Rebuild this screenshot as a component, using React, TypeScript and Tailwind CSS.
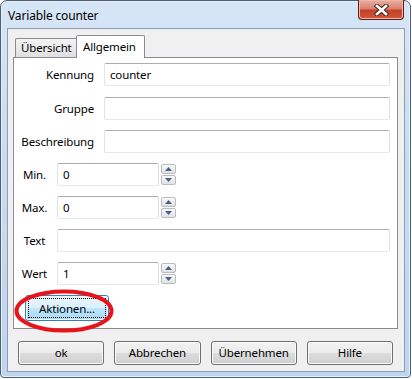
import React from "react";

function TextBox({ w, value }: { w: string; value?: string }) {
  return (
    <div
      className={`${w} h-[23px] shrink-0 rounded-[2px] border border-[#abadb3] border-l-[#e2e3ea] border-r-[#dbdfe6] border-b-[#e3e9ef] bg-white pl-[5px] flex items-center text-black`}
    >
      {value}
    </div>
  );
}

function SpinBtn({ up }: { up?: boolean }) {
  return (
    <div className="w-[15px] h-[10px] rounded-[2px] border border-[#bcbcbc] bg-gradient-to-b from-[#f9f9f9] to-[#e2e2e2] flex items-center justify-center">
      <svg width="7" height="4" viewBox="0 0 7 4">
        {up ? (
          <path d="M0 4 L3.5 0 L7 4 Z" fill="#4a5f8c" />
        ) : (
          <path d="M0 0 L3.5 4 L7 0 Z" fill="#4a5f8c" />
        )}
      </svg>
    </div>
  );
}

function Spin() {
  return (
    <div className="ml-[2px] flex flex-col gap-[1px] pt-[1px]">
      <SpinBtn up />
      <SpinBtn />
    </div>
  );
}

function Btn({ children }: { children: React.ReactNode }) {
  return (
    <div className="h-[24px] rounded-[3px] border border-[#707070] bg-[linear-gradient(#f2f2f2_0%,#ebebeb_50%,#dddddd_50%,#cfcfcf_100%)] shadow-[inset_0_0_0_1px_#fafafa] flex items-center justify-center text-black">
      {children}
    </div>
  );
}

export default function App() {
  return (
    <div className="w-[412px] h-[379px] bg-white font-['Noto_Sans',sans-serif] text-[11.5px] tracking-[-0.15px] leading-none text-black">
      <div className="w-[411px] h-[378px] rounded-t-[7px] rounded-b-[4px] border border-[#4f5f73] bg-[linear-gradient(180deg,#d6e6f7_0%,#c9dcf1_40%,#bfd5ee_100%)] flex flex-col shadow-[inset_0_0_0_1px_#e6f0fb]">
        {/* title bar */}
        <div className="h-[27px] flex items-start justify-between pl-[7px]">
          <div className="mt-[9px] text-[12px] text-black">Variable counter</div>
          <div className="mt-[-1px] mr-[6px] w-[46px] h-[20px] rounded-b-[4px] border border-[#5e1c14] border-t-0 bg-[linear-gradient(180deg,#eab0a2_0%,#d98170_45%,#c4402a_55%,#d2583c_100%)] shadow-[inset_0_0_0_1px_#efb9aa] flex items-center justify-center">
            <svg width="15" height="12" viewBox="0 0 15 12">
              <path d="M3 2 L12 10 M12 2 L3 10" stroke="#4a2a2a" strokeWidth="4.6" strokeLinecap="square" />
              <path d="M3 2 L12 10 M12 2 L3 10" stroke="#ffffff" strokeWidth="2.6" strokeLinecap="square" />
            </svg>
          </div>
        </div>

        {/* client area */}
        <div className="ml-[6px] w-[398px] h-[344px] border border-[#8d9db1] bg-[#f0f0f0] flex flex-col">
          <div className="mt-[6px] ml-[5px] w-[385px] flex flex-col">
            {/* tabs */}
            <div className="h-[22px] flex items-end pl-[2px]">
              <div className="w-[61px] h-[19px] border-l border-t border-[#898c95] bg-[linear-gradient(180deg,#f3f3f3_0%,#ebebeb_50%,#dedede_100%)] flex items-center pl-[5px] rounded-tl-[2px]">
                Übersicht
              </div>
              <div className="relative z-10 -mb-px w-[69px] h-[23px] border-l border-t border-r border-[#898c95] bg-white flex items-start pt-[5px] pl-[6px] rounded-t-[2px]">
                Allgemein
              </div>
            </div>
            {/* panel */}
            <div className="h-[272px] border border-[#898c95] bg-white flex flex-col pt-[5px]">
              <div className="flex items-center">
                <div className="w-[80px] text-right">Kennung</div>
                <div className="ml-[10px]">
                  <TextBox w="w-[286px]" value="counter" />
                </div>
              </div>
              <div className="mt-[11px] flex items-center">
                <div className="w-[80px] text-right">Gruppe</div>
                <div className="ml-[10px]">
                  <TextBox w="w-[286px]" />
                </div>
              </div>
              <div className="mt-[10px] flex items-center">
                <div className="w-[80px] text-right">Beschreibung</div>
                <div className="ml-[10px]">
                  <TextBox w="w-[286px]" />
                </div>
              </div>
              <div className="mt-[10px] flex items-start">
                <div className="w-[41px] h-[23px] flex items-center justify-center">Min.</div>
                <div className="ml-[2px]">
                  <TextBox w="w-[102px]" value="0" />
                </div>
                <Spin />
              </div>
              <div className="mt-[10px] flex items-start">
                <div className="w-[41px] h-[23px] flex items-center justify-center">Max.</div>
                <div className="ml-[2px]">
                  <TextBox w="w-[102px]" value="0" />
                </div>
                <Spin />
              </div>
              <div className="mt-[10px] flex items-start">
                <div className="w-[41px] h-[23px] flex items-center justify-center">Text</div>
                <div className="ml-[2px]">
                  <TextBox w="w-[333px]" />
                </div>
              </div>
              <div className="mt-[10px] flex items-start">
                <div className="w-[41px] h-[23px] flex items-center justify-center">Wert</div>
                <div className="ml-[2px]">
                  <TextBox w="w-[102px]" value="1" />
                </div>
                <Spin />
              </div>
              <div className="mt-[10px] ml-[11px] relative w-[84px] h-[26px]">
                <div className="w-[84px] h-[26px] rounded-[3px] border border-[#3c7fb1] bg-[linear-gradient(#eaf6fd_0%,#d9f0fc_50%,#bee6fd_50%,#a7d9f5_100%)] shadow-[inset_0_0_0_1px_#e8f6fe] flex items-center justify-center relative">
                  <div className="absolute inset-[2px] border border-dotted border-black" />
                  <span className="relative mt-[1px]">Aktionen...</span>
                </div>
                <svg
                  className="absolute left-[-11px] top-[-6px] pointer-events-none"
                  width="100"
                  height="44"
                  viewBox="0 0 100 44"
                >
                  <ellipse cx="50" cy="22" rx="47.5" ry="19.5" fill="none" stroke="#e8141c" strokeWidth="4" />
                </svg>
              </div>
            </div>
          </div>
          {/* bottom buttons */}
          <div className="mt-[12px] ml-[10px] w-[375px] grid grid-cols-4 gap-x-[10px]">
            <Btn>ok</Btn>
            <Btn>Abbrechen</Btn>
            <Btn>Übernehmen</Btn>
            <Btn>Hilfe</Btn>
          </div>
        </div>
      </div>
    </div>
  );
}
